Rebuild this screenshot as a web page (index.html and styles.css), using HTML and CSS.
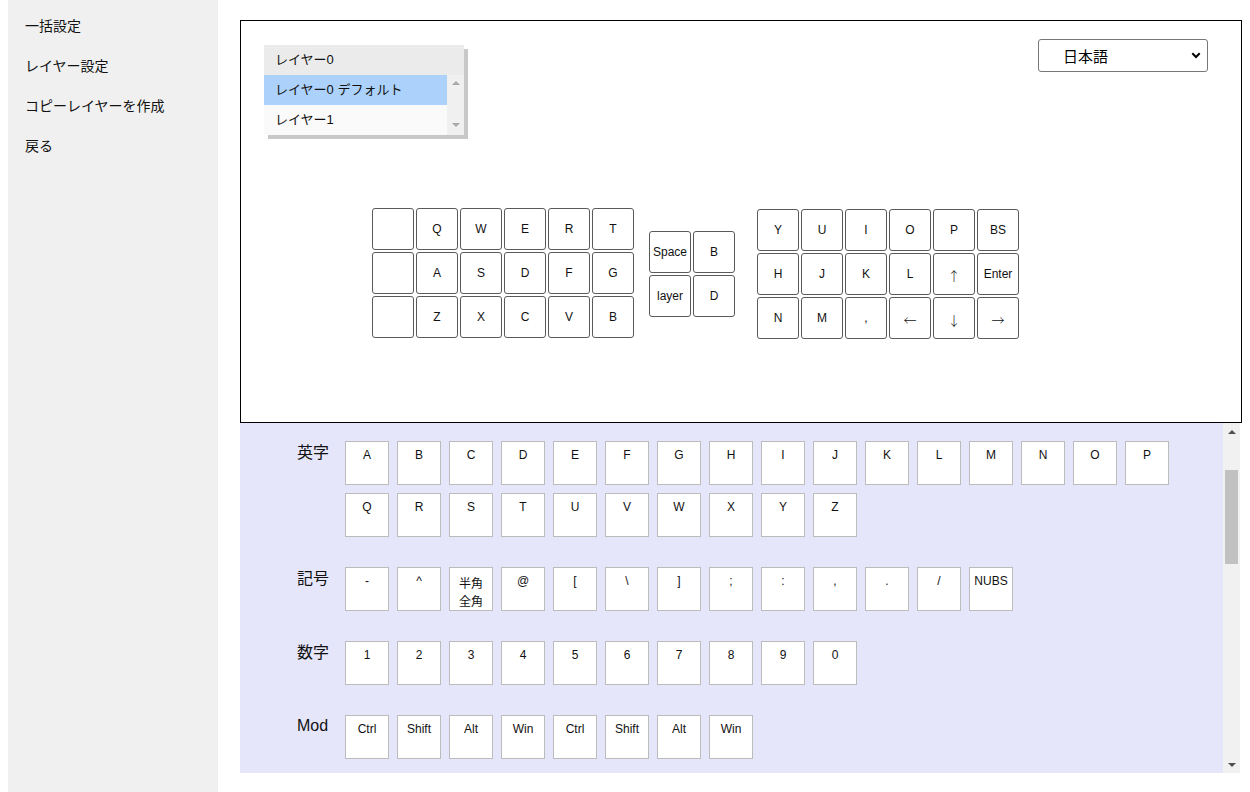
FILE: index.html
```html
<!DOCTYPE html>
<html lang="ja">
<head>
<meta charset="utf-8">
<title>キーマップ設定</title>
<link rel="stylesheet" href="styles.css">
</head>
<body>
<div class="app">
  <nav class="sidebar">
    <a class="nav-item">一括設定</a>
    <a class="nav-item">レイヤー設定</a>
    <a class="nav-item">コピーレイヤーを作成</a>
    <a class="nav-item">戻る</a>
  </nav>
  <main class="main">
    <section class="editor">
      <div class="editor-head">
        <div class="layer-list">
          <div class="layer-row layer-head">レイヤー0</div>
          <div class="layer-body">
            <div class="layer-items">
              <div class="layer-row selected">レイヤー0 デフォルト</div>
              <div class="layer-row plain">レイヤー1</div>
            </div>
            <div class="mini-sb"><span class="tri tri-up light"></span><span class="tri tri-down light"></span></div>
          </div>
        </div>
        <div class="lang-select">
          <span>日本語</span>
          <svg class="chev" width="10" height="7" viewBox="0 0 10 7"><path d="M1.3 1.3 L5 5 L8.7 1.3" fill="none" stroke="#000" stroke-width="2"/></svg>
        </div>
      </div>
      <div class="keyboard">
        <div class="kb-block kb-left">
          <div class="key"></div><div class="key">Q</div><div class="key">W</div><div class="key">E</div><div class="key">R</div><div class="key">T</div>
          <div class="key"></div><div class="key">A</div><div class="key">S</div><div class="key">D</div><div class="key">F</div><div class="key">G</div>
          <div class="key"></div><div class="key">Z</div><div class="key">X</div><div class="key">C</div><div class="key">V</div><div class="key">B</div>
        </div>
        <div class="kb-block kb-mid">
          <div class="key">Space</div><div class="key">B</div>
          <div class="key">layer</div><div class="key">D</div>
        </div>
        <div class="kb-block kb-right">
          <div class="key">Y</div><div class="key">U</div><div class="key">I</div><div class="key">O</div><div class="key">P</div><div class="key">BS</div>
          <div class="key">H</div><div class="key">J</div><div class="key">K</div><div class="key">L</div><div class="key arrow">↑</div><div class="key">Enter</div>
          <div class="key">N</div><div class="key">M</div><div class="key">,</div><div class="key arrow">←</div><div class="key arrow">↓</div><div class="key arrow">→</div>
        </div>
      </div>
    </section>
    <section class="palette">
      <div class="palette-content">
        <div class="group">
          <div class="group-label cjk">英字</div>
          <div class="keys">
            <div class="pkey">A</div><div class="pkey">B</div><div class="pkey">C</div><div class="pkey">D</div><div class="pkey">E</div><div class="pkey">F</div><div class="pkey">G</div><div class="pkey">H</div><div class="pkey">I</div><div class="pkey">J</div><div class="pkey">K</div><div class="pkey">L</div><div class="pkey">M</div><div class="pkey">N</div><div class="pkey">O</div><div class="pkey">P</div>
            <div class="pkey">Q</div><div class="pkey">R</div><div class="pkey">S</div><div class="pkey">T</div><div class="pkey">U</div><div class="pkey">V</div><div class="pkey">W</div><div class="pkey">X</div><div class="pkey">Y</div><div class="pkey">Z</div>
          </div>
        </div>
        <div class="group">
          <div class="group-label cjk">記号</div>
          <div class="keys">
            <div class="pkey">-</div><div class="pkey">^</div><div class="pkey two">半角<br>全角</div><div class="pkey">@</div><div class="pkey">[</div><div class="pkey">\</div><div class="pkey">]</div><div class="pkey">;</div><div class="pkey">:</div><div class="pkey">,</div><div class="pkey">.</div><div class="pkey">/</div><div class="pkey">NUBS</div>
          </div>
        </div>
        <div class="group">
          <div class="group-label cjk">数字</div>
          <div class="keys">
            <div class="pkey">1</div><div class="pkey">2</div><div class="pkey">3</div><div class="pkey">4</div><div class="pkey">5</div><div class="pkey">6</div><div class="pkey">7</div><div class="pkey">8</div><div class="pkey">9</div><div class="pkey">0</div>
          </div>
        </div>
        <div class="group">
          <div class="group-label">Mod</div>
          <div class="keys">
            <div class="pkey">Ctrl</div><div class="pkey">Shift</div><div class="pkey">Alt</div><div class="pkey">Win</div><div class="pkey">Ctrl</div><div class="pkey">Shift</div><div class="pkey">Alt</div><div class="pkey">Win</div>
          </div>
        </div>
      </div>
      <div class="sb">
        <div class="sb-btn"><span class="tri tri-up"></span></div>
        <div class="sb-track"><div class="sb-thumb"></div></div>
        <div class="sb-btn sb-btn-bottom"><span class="tri tri-down"></span></div>
      </div>
    </section>
  </main>
</div>
</body>
</html>
```
FILE: styles.css
```css
html, body {
  margin: 0;
  padding: 0;
  background: #fff;
}
body {
  font-family: "Liberation Sans", "Noto Sans CJK JP", sans-serif;
  color: #000;
}
.app {
  display: flex;
  height: 792px;
  overflow: hidden;
}
.sidebar {
  width: 210px;
  margin-left: 8px;
  background: #f0f0f0;
  padding-top: 5px;
  box-sizing: border-box;
  flex-shrink: 0;
}
.nav-item {
  display: block;
  padding-left: 17px;
  height: 40px;
  line-height: 40px;
  font-size: 14px;
  color: #111;
  font-family: "Noto Sans CJK JP", "Liberation Sans", sans-serif;
}
.main {
  margin-left: 22px;
  width: 1002px;
  padding-top: 20px;
  display: flex;
  flex-direction: column;
}
.editor {
  border: 1px solid #000;
  height: 403px;
  box-sizing: border-box;
}
.editor-head {
  display: flex;
  justify-content: space-between;
  align-items: flex-start;
  padding: 18px 33px 0 23px;
}
.layer-list {
  margin-top: 6px;
  width: 200px;
  box-shadow: 4px 4px 0 #c8c8c8;
  font-size: 13px;
  background: #f0f0f0;
}
.layer-row {
  height: 30px;
  line-height: 30px;
  padding-left: 11px;
  color: #111;
  white-space: nowrap;
}
.layer-head {
  background: #ebebeb;
}
.layer-body {
  display: flex;
}
.layer-items {
  flex: 1;
}
.selected {
  background: #acd2fb;
}
.plain {
  background: #fafafa;
}
.mini-sb {
  width: 17px;
  background: #f0f0f0;
  display: flex;
  flex-direction: column;
  align-items: center;
  justify-content: space-between;
  padding: 6px 0 8px;
  box-sizing: border-box;
}
.tri {
  display: block;
  width: 0;
  height: 0;
  border-left: 4px solid transparent;
  border-right: 4px solid transparent;
}
.tri-up {
  border-bottom: 4px solid #505050;
}
.tri-down {
  border-top: 4px solid #505050;
}
.tri-up.light {
  border-bottom-color: #a8a8a8;
}
.tri-down.light {
  border-top-color: #a8a8a8;
}
.lang-select {
  width: 170px;
  height: 33px;
  box-sizing: border-box;
  border: 1px solid #767676;
  border-radius: 3px;
  display: flex;
  align-items: center;
  justify-content: space-between;
  padding: 0 6px 0 24px;
  font-size: 15px;
  font-family: "Noto Sans CJK JP", sans-serif;
  background: #fff;
}
.chev {
  display: block;
}
.keyboard {
  display: flex;
  align-items: flex-start;
  margin-top: 73px;
  padding-left: 131px;
}
.kb-block {
  display: grid;
  gap: 2px;
}
.kb-left, .kb-right {
  grid-template-columns: repeat(6, 42px);
}
.kb-mid {
  grid-template-columns: repeat(2, 42px);
  margin-left: 15px;
  margin-top: 23px;
}
.kb-right {
  margin-left: 22px;
  margin-top: 1px;
}
.key {
  width: 42px;
  height: 42px;
  box-sizing: border-box;
  border: 1px solid #5a5a5a;
  border-radius: 3px;
  background: #fff;
  display: flex;
  align-items: center;
  justify-content: center;
  font-size: 12px;
  color: #111;
}
.key.arrow {
  font-family: "Noto Sans CJK JP", sans-serif;
  font-weight: 300;
  font-size: 13px;
  padding-top: 2px;
}
.palette {
  height: 350px;
  width: 1000px;
  background: #e6e6fa;
  display: flex;
}
.palette-content {
  flex: 1;
  padding: 18px 0 0 57px;
  overflow: hidden;
}
.group {
  display: flex;
  margin-bottom: 30px;
}
.group-label {
  width: 48px;
  font-size: 16px;
  line-height: 20px;
  padding-top: 1px;
  color: #111;
  flex-shrink: 0;
}
.group-label.cjk {
  padding-top: 2px;
}
.keys {
  width: 840px;
  display: flex;
  flex-wrap: wrap;
  gap: 8px;
}
.pkey {
  width: 44px;
  height: 44px;
  box-sizing: border-box;
  border: 1px solid #bcbcbc;
  background: #fff;
  text-align: center;
  font-size: 12px;
  line-height: 18px;
  padding-top: 4px;
  color: #111;
}
.pkey.two {
  padding-top: 6px;
  line-height: 18px;
  font-family: "Noto Sans CJK JP", sans-serif;
}
.sb {
  width: 17px;
  background: #f1f1f1;
  display: flex;
  flex-direction: column;
}
.sb-btn {
  height: 17px;
  display: flex;
  align-items: center;
  justify-content: center;
}
.sb-btn-bottom {
  margin-top: auto;
}
.sb-track {
  padding: 30px 2px 0;
}
.sb-thumb {
  height: 94px;
  background: #c1c1c1;
}
```
